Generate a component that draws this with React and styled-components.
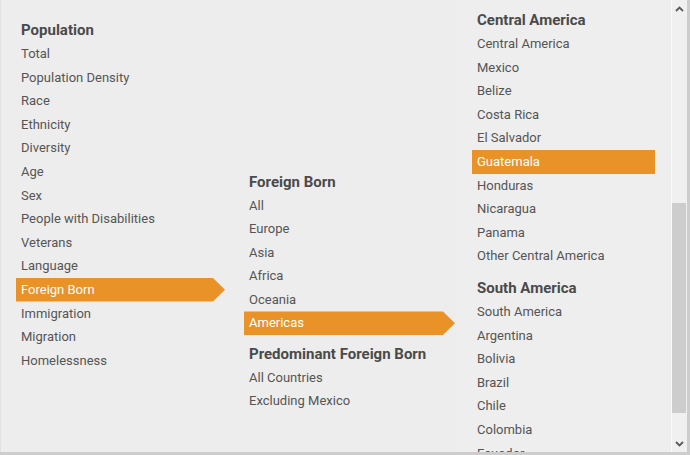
import React from "react";
import styled, { createGlobalStyle } from "styled-components";

const GlobalStyle = createGlobalStyle`
  html, body {
    margin: 0;
    padding: 0;
    background: #cdcdcd;
  }
  body {
    width: 690px;
    height: 455px;
    overflow: hidden;
    font-family: Roboto, "Liberation Sans", sans-serif;
  }
`;

const columns = [
  {
    top: 19,
    gap: 8,
    tail: 3,
    groups: [
      {
        title: "Population",
        items: [
          "Total",
          "Population Density",
          "Race",
          "Ethnicity",
          "Diversity",
          "Age",
          "Sex",
          "People with Disabilities",
          "Veterans",
          "Language",
          "Foreign Born",
          "Immigration",
          "Migration",
          "Homelessness",
        ],
      },
    ],
    active: "Foreign Born",
    arrow: true,
  },
  {
    top: 170.5,
    gap: 7.5,
    tail: 1,
    groups: [
      {
        title: "Foreign Born",
        items: ["All", "Europe", "Asia", "Africa", "Oceania", "Americas"],
      },
      {
        title: "Predominant Foreign Born",
        items: ["All Countries", "Excluding Mexico"],
      },
    ],
    active: "Americas",
    arrow: true,
  },
  {
    top: 9,
    gap: 9,
    tail: 15,
    groups: [
      {
        title: "Central America",
        items: [
          "Central America",
          "Mexico",
          "Belize",
          "Costa Rica",
          "El Salvador",
          "Guatemala",
          "Honduras",
          "Nicaragua",
          "Panama",
          "Other Central America",
        ],
      },
      {
        title: "South America",
        items: [
          "South America",
          "Argentina",
          "Bolivia",
          "Brazil",
          "Chile",
          "Colombia",
          "Ecuador",
        ],
      },
    ],
    active: "Guatemala",
    arrow: false,
  },
];

function Chevron({ up }) {
  return (
    <svg width="9" height="6" viewBox="0 0 9 6">
      <path
        d={up ? "M1 5 L4.5 1.5 L8 5" : "M1 1 L4.5 4.5 L8 1"}
        fill="none"
        stroke="#5a5a5a"
        strokeWidth="1.8"
      />
    </svg>
  );
}

export default function App() {
  return (
    <>
      <GlobalStyle />
      <Panel>
        {columns.map((col, i) => (
          <Column key={i} $top={col.top} $last={i === columns.length - 1}>
            {col.groups.map((g, j) => (
              <Group key={g.title} $gap={j === 0 ? 0 : col.gap}>
                <Heading>{g.title}</Heading>
                {g.items.map((item) => (
                  <Item
                    key={item}
                    $active={item === col.active}
                    $arrow={col.arrow}
                    $tail={col.tail}
                  >
                    {item}
                  </Item>
                ))}
              </Group>
            ))}
          </Column>
        ))}
        <Scrollbar>
          <ArrowBox>
            <Chevron up />
          </ArrowBox>
          <Track>
            <Thumb />
          </Track>
          <ArrowBox>
            <Chevron />
          </ArrowBox>
        </Scrollbar>
      </Panel>
    </>
  );
}

const Panel = styled.div`
  width: 687px;
  height: 452px;
  display: flex;
  background: #ededed;
  box-shadow: inset 1px 0 0 #e2e2e2;
  overflow: hidden;
`;

const Column = styled.div`
  width: ${(p) => (p.$last ? "214px" : "228px")};
  flex-shrink: 0;
  padding-top: ${(p) => p.$top}px;
  box-sizing: border-box;
  background: ${(p) => (p.$last ? "#eeeeee" : "transparent")};
  overflow: hidden;
`;

const Group = styled.div`
  margin-top: ${(p) => p.$gap}px;
`;

const Heading = styled.div`
  height: 23px;
  line-height: 23px;
  padding-left: 21px;
  font-size: 15px;
  font-weight: 700;
  color: #4a4a4a;
  white-space: nowrap;
`;

const Item = styled.div`
  height: 23.6px;
  line-height: 23.6px;
  font-size: 13px;
  white-space: nowrap;
  padding-left: 5px;
  margin: 0 ${(p) => p.$tail}px 0 16px;
  color: ${(p) => (p.$active ? "#ffffff" : "#555555")};
  background: ${(p) => (p.$active ? "#e89228" : "transparent")};
  clip-path: ${(p) =>
    p.$active && p.$arrow
      ? "polygon(0 0, calc(100% - 12px) 0, 100% 50%, calc(100% - 12px) 100%, 0 100%)"
      : "none"};
`;

const Scrollbar = styled.div`
  width: 16px;
  margin-left: 1px;
  border-left: 1px solid #fafafa;
  display: flex;
  flex-direction: column;
  background: #f0f0f0;
`;

const ArrowBox = styled.div`
  height: 17px;
  display: flex;
  align-items: center;
  justify-content: center;
  flex-shrink: 0;
`;

const Track = styled.div`
  flex: 1;
  display: flex;
  flex-direction: column;
  padding-top: 186px;
`;

const Thumb = styled.div`
  height: 210px;
  margin-right: 1px;
  background: #cdcdcd;
`;
